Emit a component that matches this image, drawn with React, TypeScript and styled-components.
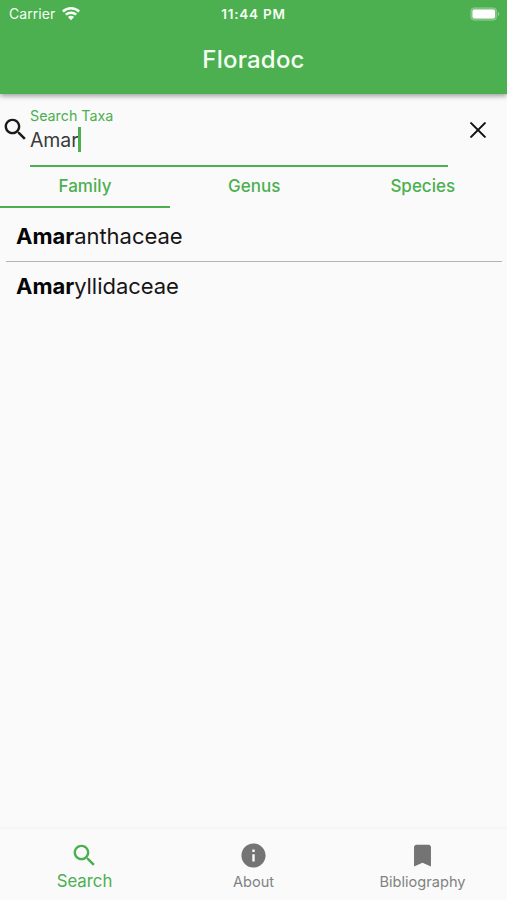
import React from "react";
import styled, { createGlobalStyle } from "styled-components";

const GREEN = "#4caf50";

const GlobalStyle = createGlobalStyle`
  * { box-sizing: border-box; }
  body { margin: 0; background: #fafafa; font-family: Inter, sans-serif; }
  button { border: 0; padding: 0; margin: 0; background: none; font-family: inherit; }
`;

const Screen = styled.div`
  display: flex;
  flex-direction: column;
  height: 900px;
  overflow: hidden;
  background: #fafafa;
`;

const Header = styled.header`
  flex: none;
  height: 94px;
  color: #f6fff3;
  background: ${GREEN};
  box-shadow: 0 2px 5px rgba(0, 0, 0, 0.38);
  z-index: 1;
`;

const StatusBar = styled.div`
  display: grid;
  grid-template-columns: 1fr auto 1fr;
  align-items: center;
  height: 27px;
  padding: 0 7px 0 9px;
`;

const Carrier = styled.div`
  display: flex;
  align-items: center;
  gap: 7px;
  font-size: 14px;
  letter-spacing: 0.05px;
`;

const Time = styled.div`
  font-size: 13.5px;
  font-weight: 600;
  letter-spacing: 0.75px;
  margin-right: 2px;
`;

const BatterySlot = styled.div`
  display: flex;
  justify-content: flex-end;
`;

const Title = styled.h1`
  margin: 0;
  height: 67px;
  line-height: 65px;
  text-align: center;
  font-size: 24px;
  font-weight: 500;
  letter-spacing: 0.2px;
`;

const SearchRow = styled.div`
  flex: none;
  display: flex;
  height: 73px;
  color: #1b1b1b;
`;

const SearchIconSlot = styled.div`
  width: 30px;
  padding: 21px 0 0 1px;
`;

const Field = styled.label`
  display: flex;
  flex-direction: column;
  width: 418px;
  padding-top: 12px;
  border-bottom: 2px solid ${GREEN};
`;

const FieldLabel = styled.span`
  height: 20px;
  line-height: 19px;
  font-size: 14.3px;
  letter-spacing: -0.02px;
  color: ${GREEN};
`;

const FieldValue = styled.span`
  display: flex;
  align-items: center;
  height: 27px;
  font-size: 19.5px;
  letter-spacing: -0.1px;
  color: #3a3a3a;
`;

const Caret = styled.span`
  width: 2.5px;
  height: 25px;
  background: ${GREEN};
`;

const ClearButton = styled.button`
  display: flex;
  width: 59px;
  height: 73px;
  padding: 28px 0 0 21.5px;
  color: #111;
`;

const Tabs = styled.div`
  flex: none;
  display: grid;
  grid-template-columns: 170px 1fr 1fr;
  height: 41px;
`;

const Tab = styled.button<{ $active?: boolean }>`
  height: 41px;
  padding-bottom: ${(p) => (p.$active ? 1 : 3)}px;
  border-bottom: ${(p) => (p.$active ? `2px solid ${GREEN}` : "0")};
  font-size: 17px;
  font-weight: 500;
  letter-spacing: 0;
  color: ${GREEN};
`;

const List = styled.ul`
  flex: 1;
  margin: 0;
  padding: 3px 5px 0 6px;
  list-style: none;
`;

const Item = styled.li`
  height: 50px;
  padding-left: 10px;
  line-height: 51px;
  font-size: 22px;
  letter-spacing: -0.03px;
  color: #161616;
  & + & {
    border-top: 1px solid #b4b4b4;
    line-height: 49px;
  }
`;

const Match = styled.b`
  font-weight: 700;
  color: #050505;
`;

const BottomNav = styled.nav`
  flex: none;
  display: grid;
  grid-template-columns: repeat(3, 1fr);
  height: 71px;
  box-shadow: 0 -1px 3px rgba(0, 0, 0, 0.035);
`;

const NavItem = styled.button<{ $active?: boolean }>`
  display: flex;
  flex-direction: column;
  align-items: center;
  padding-top: 12px;
  color: ${(p) => (p.$active ? GREEN : "#747474")};
`;

const NavLabel = styled.span<{ $active?: boolean }>`
  line-height: 20px;
  margin-top: ${(p) => (p.$active ? 1 : 2)}px;
  font-size: ${(p) => (p.$active ? 16.8 : 14.6)}px;
  color: ${(p) => (p.$active ? GREEN : "#828282")};
`;

const Icon = styled.svg`
  display: block;
  flex: none;
  fill: currentColor;
`;

const SEARCH =
  "M15.5 14h-.79l-.28-.27C15.41 12.59 16 11.11 16 9.5 16 5.91 13.09 3 9.5 3S3 5.91 3 9.5 5.91 16 9.5 16c1.61 0 3.09-.59 4.23-1.57l.27.28v.79l5 4.99L20.49 19l-4.99-5zm-6 0C7.01 14 5 11.99 5 9.5S7.01 5 9.5 5 14 7.01 14 9.5 11.99 14 9.5 14z";
const INFO =
  "M12 2C6.48 2 2 6.48 2 12s4.48 10 10 10 10-4.48 10-10S17.52 2 12 2zm1 15h-2v-6h2v6zm0-8h-2V7h2v2z";
const BOOKMARK = "M17 3H7c-1.1 0-2 .9-2 2v16l7-3 7 3V5c0-1.1-.9-2-2-2z";

const MaterialIcon = ({ d }: { d: string }) => (
  <Icon width="29" height="29" viewBox="0 0 24 24">
    <path d={d} />
  </Icon>
);

const WifiIcon = () => (
  <Icon width="18" height="14" viewBox="0 0 18 14">
    <path d="M9 0C5.5 0 2.4 1.3 0 3.6l1.7 1.8a10.6 10.6 0 0 1 14.6 0L18 3.6A13 13 0 0 0 9 0Z" />
    <path d="M9 4.5a9 9 0 0 0-6.1 2.3l1.8 1.8a6.3 6.3 0 0 1 8.6 0l1.8-1.8A9 9 0 0 0 9 4.5Z" />
    <path d="M9 8.8c-1.2 0-2.3.4-3.1 1.1L9 13.2l3.1-3.3A4.6 4.6 0 0 0 9 8.8Z" />
  </Icon>
);

const BatteryIcon = () => (
  <Icon width="30" height="14" viewBox="0 0 30 14">
    <rect x=".7" y=".7" width="26" height="12.6" rx="3.6" fill="#fff" fillOpacity=".25" stroke="#fff" strokeOpacity=".2" />
    <rect x="2.5" y="2.5" width="22.5" height="9" rx="2" fill="#fff" />
    <path d="M28 5v4c1.6-.7 1.6-3.3 0-4Z" fillOpacity=".5" />
  </Icon>
);

const results = ["anthaceae", "yllidaceae"];
const query = "Amar";

const navItems = [
  { label: "Search", icon: SEARCH, active: true },
  { label: "About", icon: INFO },
  { label: "Bibliography", icon: BOOKMARK },
];

export default function App() {
  return (
    <Screen>
      <GlobalStyle />
      <Header>
        <StatusBar>
          <Carrier>
            Carrier
            <WifiIcon />
          </Carrier>
          <Time>11:44 PM</Time>
          <BatterySlot>
            <BatteryIcon />
          </BatterySlot>
        </StatusBar>
        <Title>Floradoc</Title>
      </Header>
      <SearchRow>
        <SearchIconSlot>
          <MaterialIcon d={SEARCH} />
        </SearchIconSlot>
        <Field>
          <FieldLabel>Search Taxa</FieldLabel>
          <FieldValue>
            {query}
            <Caret />
          </FieldValue>
        </Field>
        <ClearButton aria-label="Clear">
          <Icon width="16" height="16" viewBox="0 0 17 17">
            <path d="M1.2 1.2l14.6 14.6M15.8 1.2L1.2 15.8" stroke="currentColor" strokeWidth="2.2" strokeLinecap="round" />
          </Icon>
        </ClearButton>
      </SearchRow>
      <Tabs>
        <Tab $active>Family</Tab>
        <Tab>Genus</Tab>
        <Tab>Species</Tab>
      </Tabs>
      <List>
        {results.map((rest) => (
          <Item key={rest}>
            <Match>{query}</Match>
            {rest}
          </Item>
        ))}
      </List>
      <BottomNav>
        {navItems.map(({ label, icon, active }) => (
          <NavItem key={label} $active={active}>
            <MaterialIcon d={icon} />
            <NavLabel $active={active}>{label}</NavLabel>
          </NavItem>
        ))}
      </BottomNav>
    </Screen>
  );
}
